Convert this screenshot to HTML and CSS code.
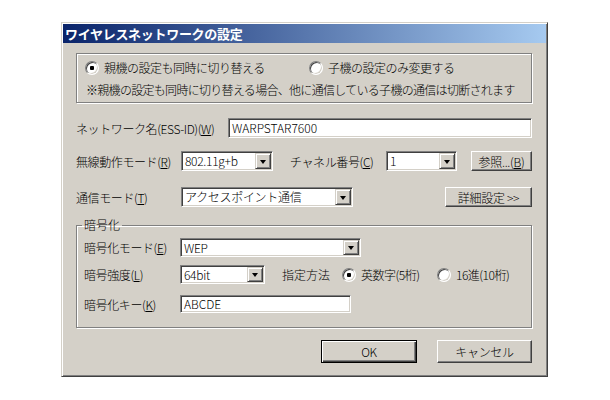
FILE: index.html
```html
<!DOCTYPE html>
<html lang="ja">
<head>
  <meta charset="UTF-8" />
  <title>ワイヤレスネットワークの設定</title>
  <link rel="stylesheet" href="styles.css">
</head>
<body>

  <!-- Dialog window -->
  <div class="window">
    <div class="titlebar">ワイヤレスネットワークの設定</div>

    <div class="content">
      <!-- Apply target -->
      <div class="group sync">
        <div class="radio-row">
          <span class="radio radio-first checked">親機の設定も同時に切り替える</span>
          <span class="radio">子機の設定のみ変更する</span>
        </div>
        <p class="note">※親機の設定も同時に切り替える場合、他に通信している子機の通信は切断されます</p>
      </div>

      <!-- ESS-ID -->
      <div class="row row-ssid">
        <span class="lbl">ネットワーク名(ESS-ID)(<u>W</u>)</span>
        <div class="field field-ssid">WARPSTAR7600</div>
      </div>

      <!-- Mode / channel -->
      <div class="row row-mode">
        <span class="lbl">無線動作モード(<u>R</u>)</span>
        <div class="select select-mode"><span class="val">802.11g+b</span><i class="drop"></i></div>
        <span class="lbl-ch">チャネル番号(<u>C</u>)</span>
        <div class="select select-ch"><span class="val">1</span><i class="drop"></i></div>
        <button class="btn btn-ref">参照...(<u>B</u>)</button>
      </div>

      <!-- Communication mode -->
      <div class="row row-comm">
        <span class="lbl">通信モード(<u>T</u>)</span>
        <div class="select select-comm"><span class="val">アクセスポイント通信</span><i class="drop"></i></div>
        <button class="btn btn-detail">詳細設定 &gt;&gt;</button>
      </div>

      <!-- Encryption -->
      <fieldset class="group crypto">
        <legend>暗号化</legend>

        <div class="row crow crow-mode">
          <span class="clbl">暗号化モード(<u>E</u>)</span>
          <div class="select select-enc"><span class="val">WEP</span><i class="drop"></i></div>
        </div>

        <div class="row crow crow-strength">
          <span class="clbl">暗号強度(<u>L</u>)</span>
          <div class="select select-bits"><span class="val">64bit</span><i class="drop"></i></div>
          <span class="lbl-how">指定方法</span>
          <span class="radio radio-ascii checked">英数字(5桁)</span>
          <span class="radio">16進(10桁)</span>
        </div>

        <div class="row crow crow-key">
          <span class="clbl">暗号化キー(<u>K</u>)</span>
          <div class="field field-key">ABCDE</div>
        </div>
      </fieldset>

      <!-- Dialog buttons -->
      <div class="actions">
        <button class="btn btn-ok">OK</button>
        <button class="btn btn-cancel">キャンセル</button>
      </div>
    </div>
  </div>

</body>
</html>
```

FILE: styles.css
```css
* {
  box-sizing: border-box;
}

body {
  margin: 0;
  background: #fff;
  font-family: "Noto Sans CJK JP", "Liberation Sans", sans-serif;
  font-size: 12px;
  font-weight: 300;
  color: #000;
}

u {
  text-underline-offset: 1px;
}

/* Classic window frame */
.window {
  margin: 22px 0 0 61px;
  width: 487px;
  height: 355px;
  padding: 1px;
  background: #d4d0c8;
  border: 1px solid;
  border-color: #d4d0c8 #404040 #404040 #d4d0c8;
  box-shadow: inset 1px 1px #fff, inset -1px -1px #808080;
}

.titlebar {
  height: 19px;
  padding-left: 2px;
  background: linear-gradient(to right, #0a246a, #a6caf0);
  color: #fff;
  font-size: 13px;
  font-weight: bold;
  line-height: 19px;
  letter-spacing: -0.3px;
}

.content {
  padding: 10px 14px 0 13px;
}

/* Etched group box */
.group {
  border: 1px solid #808080;
  box-shadow: 1px 1px #fff, inset 1px 1px #fff;
}

.sync {
  height: 50px;
  padding: 7px 8px 0;
}

.radio-row {
  display: flex;
  align-items: center;
  height: 14px;
}

.radio {
  display: flex;
  align-items: center;
  gap: 5px;
  line-height: 14px;
  white-space: nowrap;
  letter-spacing: -0.5px;
}

.radio::before {
  content: "";
  flex: none;
  width: 12px;
  height: 12px;
  border-radius: 50%;
  border: 1px solid;
  border-color: #808080 #fff #fff #808080;
  box-shadow: inset 1px 1px #404040, inset -1px -1px #d4d0c8;
  background: #fff;
}

.radio.checked::before {
  background: radial-gradient(circle, #000 0 2px, #fff 2.5px);
}

.radio-first {
  width: 224px;
}

.note {
  margin: 8px 0 0 1px;
  line-height: 14px;
  white-space: nowrap;
  letter-spacing: -0.7px;
}

/* Form rows */
.row {
  display: flex;
  align-items: center;
  height: 20px;
  white-space: nowrap;
}

.lbl {
  width: 105px;
  letter-spacing: -0.4px;
}

.row-ssid {
  margin-top: 15px;
}

.row-mode {
  margin-top: 13px;
}

.row-comm {
  margin-top: 16px;
}

/* Sunken edit box */
.field,
.select {
  height: 20px;
  background: #fff;
  border: 1px solid;
  border-color: #808080 #fff #fff #808080;
  box-shadow: inset 1px 1px #404040, inset -1px -1px #d4d0c8;
}

.field {
  padding: 0 3px;
  line-height: 18px;
}

.select {
  display: flex;
  align-items: center;
  padding: 1px;
}

.select .val {
  padding-left: 2px;
  line-height: 16px;
  letter-spacing: -0.3px;
}

.drop {
  flex: none;
  display: flex;
  align-items: center;
  justify-content: center;
  width: 16px;
  height: 16px;
  margin-left: auto;
  background: #d4d0c8;
  border: 1px solid;
  border-color: #d4d0c8 #404040 #404040 #d4d0c8;
  box-shadow: inset 1px 1px #fff, inset -1px -1px #808080;
}

.drop::after {
  content: "";
  border-top: 4px solid #000;
  border-left: 3.5px solid transparent;
  border-right: 3.5px solid transparent;
  margin-top: 1px;
}

.field-ssid {
  margin-left: auto;
  width: 304px;
}

.select-mode {
  width: 92px;
}

.lbl-ch {
  width: 96px;
  margin-left: 17px;
  letter-spacing: -0.4px;
}

.select-ch {
  width: 71px;
}

.select-comm {
  width: 172px;
}

/* Raised push button */
.btn {
  height: 20px;
  padding: 0;
  background: #d4d0c8;
  font-family: inherit;
  font-size: 12px;
  font-weight: 300;
  color: #000;
  border: 1px solid;
  border-color: #fff #404040 #404040 #fff;
  box-shadow: inset -1px -1px #808080;
  letter-spacing: -0.3px;
}

.btn-ref {
  width: 61px;
  margin-left: auto;
}

.btn-detail {
  width: 87px;
  margin-left: auto;
}

/* Encryption frame */
.crypto {
  height: 110px;
  margin: 11px 0 0;
  padding: 0 0 0 7px;
  min-width: 0;
}

.crypto legend {
  margin-left: -2px;
  padding: 0 2px;
  line-height: 14px;
}

.clbl {
  width: 96px;
  letter-spacing: -0.4px;
}

.crow {
  height: 19px;
}

.crow .select,
.crow .field {
  height: 19px;
}

.crow .drop {
  height: 15px;
}

.crow-mode {
  margin-top: 6px;
}

.crow-strength {
  margin-top: 8px;
}

.crow-key {
  margin-top: 11px;
  height: 18px;
}

.crow-key .field {
  height: 18px;
  line-height: 16px;
}

.select-enc {
  width: 181px;
}

.select-bits {
  width: 85px;
}

.lbl-how {
  width: 60px;
  margin-left: 17px;
}

.radio-ascii {
  width: 95px;
}

.field-key {
  width: 171px;
}

/* OK / Cancel */
.actions {
  display: flex;
  justify-content: flex-end;
  gap: 20px;
  margin-top: 12px;
}

.btn-ok,
.btn-cancel {
  height: 23px;
}

.btn-ok {
  width: 96px;
  border-color: #000;
  box-shadow: inset 1px 1px #fff, inset -1px -1px #404040, inset -2px -2px #808080;
}

.btn-cancel {
  width: 95px;
}
```
